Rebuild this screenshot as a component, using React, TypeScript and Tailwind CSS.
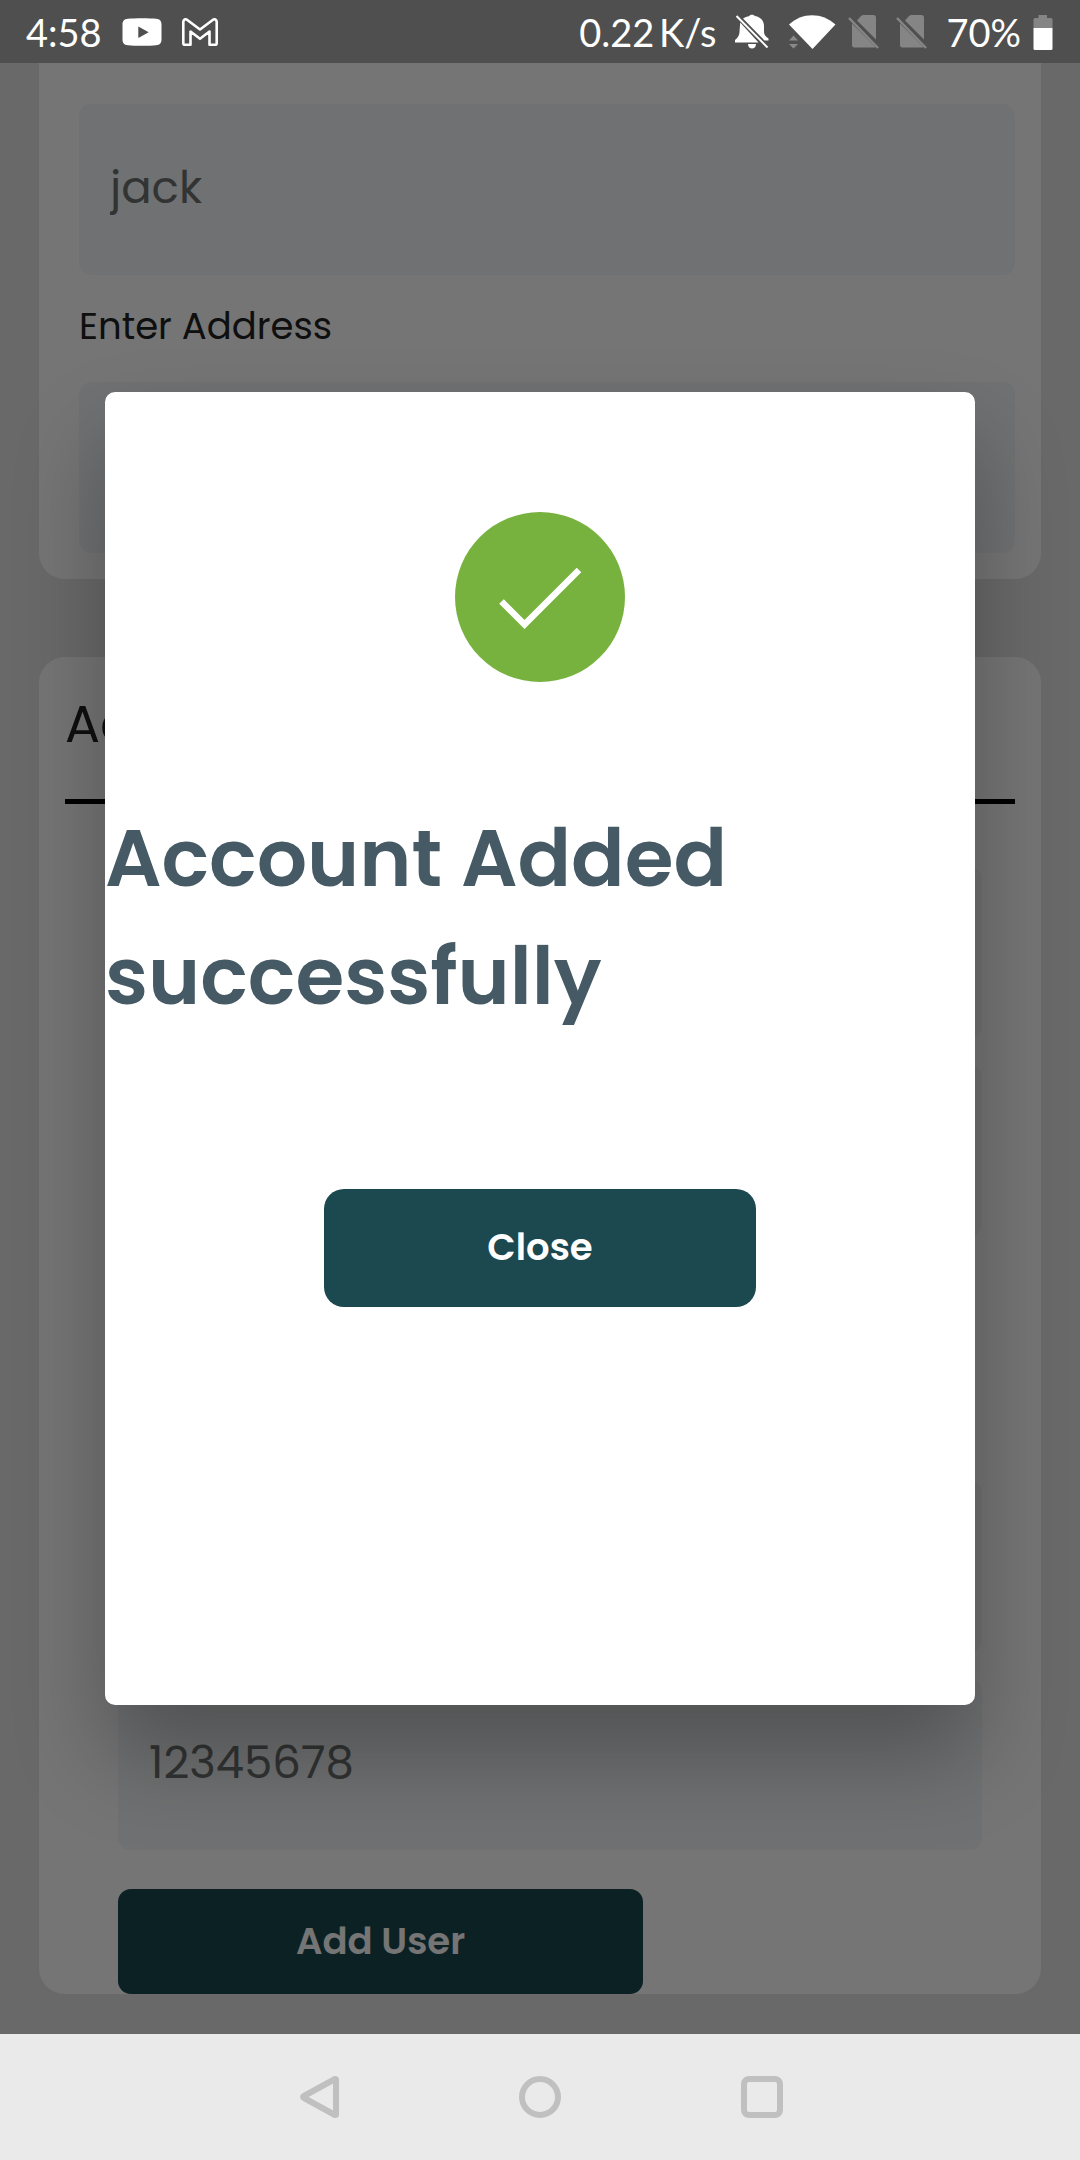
import { useId } from "react";

function YouTubeIcon() {
  return (
    <svg viewBox="0 0 40 28" className="h-7 w-10" aria-hidden="true">
      <path
        fill="#fff"
        fillRule="evenodd"
        d="M6 .8C12 0 28 0 34 .8c4 .5 5.500 2 5.500 6v14.400c0 4-1.500 5.500-5.500 6-6 .8-22 .8-28 0-4-.5-5.500-2-5.500-6V6.800c0-4 1.500-5.500 5.500-6ZM16.300 8.400v11.600L26.700 14.200Z"
      />
    </svg>
  );
}

function GmailIcon() {
  return (
    <svg viewBox="0 0 36 28" className="h-7 w-9" fill="none" stroke="#fff" strokeWidth="2.600" strokeLinejoin="round" aria-hidden="true">
      <path d="M1.300 4C1.300 1.400 3.500 .6 5.300 2L18 11.500 30.700 2C32.500 .6 34.700 1.400 34.700 4V25.200Q34.700 26.700 33.200 26.700H27.500V13.500L18 20.800 8.500 13.500V26.700H2.800Q1.300 26.700 1.300 25.200Z" />
    </svg>
  );
}

function BellOffIcon() {
  return (
    <svg viewBox="0 0 36 36" className="size-9" aria-hidden="true">
      <g fill="#fff">
        <path d="M9 4.500 30.500 26.500H34.500V24.500Q30 21.500 30 18V12C30 5.500 25 2.500 20.500 2V1.500C19.500 .5 16.500 .5 15.500 1.500V2Q11.500 2.500 9 4.500Z" />
        <path d="M6.200 8.500 24.500 28.500H1V26Q5.500 22.500 5.500 18Z" />
        <path d="M14 30H22C22 36 14 36 14 30Z" />
      </g>
      <path d="M2.500 2 33.500 33.500" stroke="#fff" strokeWidth="2" />
    </svg>
  );
}

function WifiIcon() {
  return (
    <svg viewBox="0 0 48 36" className="h-9 w-12" aria-hidden="true">
      <path fill="#fff" d="M1 10.500C14-2 34-2 47.500 10.500L24.500 35Z" />
      <path fill="#8a8a8a" d="M5.500 21.500 10 26.500H1ZM5.500 34.500 1 30H10Z" />
    </svg>
  );
}

function NoSimIcon() {
  return (
    <svg viewBox="0 0 32 36" className="h-9 w-8" aria-hidden="true">
      <path fill="#858585" d="M9 6.500 13 2Q14 1 15.500 1H25.500Q28 1 28 3.500V25.500Z" />
      <path fill="#858585" d="M4 9.500 27.500 33Q27 33.500 25.500 33.500H6.500Q4 33.500 4 31Z" />
      <path d="M1 4 30 34" stroke="#858585" strokeWidth="2.500" />
    </svg>
  );
}

function BatteryIcon() {
  return (
    <svg viewBox="0 0 20 36" className="h-9 w-5" aria-hidden="true">
      <path fill="#858585" d="M5.500 1H14V4H18Q19.500 4 19.500 5.500V14H.5V5.500Q.5 4 2 4H5.500Z" />
      <path fill="#fff" d="M.5 14H19.500V34.500Q19.500 36 18 36H2Q.5 36 .5 34.500Z" />
    </svg>
  );
}

function StatusBar() {
  return (
    <header className="flex h-[63px] items-center justify-between bg-[#4f4f4f] pl-[26px] pr-[27px] font-['Lato',sans-serif] text-[38px] leading-none text-white">
      <div className="flex items-center gap-5">
        <span>4:58</span>
        <YouTubeIcon />
        <GmailIcon />
      </div>
      <div className="flex items-center gap-[18px]">
        <span>0.22{"\u2009"}K/s</span>
        <BellOffIcon />
        <div className="flex items-center gap-3">
          <WifiIcon />
          <div className="flex items-center gap-4">
            <NoSimIcon />
            <NoSimIcon />
          </div>
        </div>
        <div className="flex items-center gap-3">
          <span>70%</span>
          <BatteryIcon />
        </div>
      </div>
    </header>
  );
}

function Field({ name, value, label }: { name: string; value?: string; label?: string }) {
  const id = useId();
  return (
    <div className="flex flex-col">
      {label && (
        <label htmlFor={id} className="pb-7 pt-6 text-[37px] leading-[55px] text-[#222]">
          {label}
        </label>
      )}
      <input
        id={id}
        type="text"
        name={name}
        aria-label={label ? undefined : name}
        defaultValue={value}
        className="h-[171px] w-full rounded-xl bg-[#f3f6f9] px-[31px] pb-1 text-[45px] text-[#6d6f70] outline-none"
      />
    </div>
  );
}

function UserForm() {
  return (
    <form className="flex flex-col gap-[78px] px-[39px] pb-10">
      <section className="rounded-b-[26px] bg-white pb-[26px] pl-10 pr-[26px] pt-[41px]">
        <Field name="Name" value="jack" />
        <Field name="Address" label="Enter Address" />
      </section>
      <section className="rounded-[26px] bg-white px-[26px]">
        <h2 className="border-b-[5px] border-black pb-[37px] pt-7 text-[52px] leading-[77px] text-[#222]">Account Details</h2>
        <div className="flex flex-col gap-[245px] pl-[53px] pr-[33px] pt-[63px]">
          <div className="flex flex-col gap-[27px]">
            <Field name="Account name" />
            <Field name="Email" />
          </div>
          <div className="flex flex-col gap-[27px]">
            <Field name="Phone" />
            <Field name="Account number" value="12345678" />
          </div>
        </div>
        <div className="flex pl-[53px] pr-[33px] pt-[39px]">
          <button type="button" className="h-[105px] w-[525px] rounded-[13px] bg-[#1b494f] text-[37px] font-semibold text-white">
            Add User
          </button>
        </div>
      </section>
    </form>
  );
}

function SuccessDialog() {
  return (
    <div className="absolute inset-0 flex items-center overflow-hidden bg-black/54 px-[105px]">
      <div
        role="dialog"
        aria-modal="true"
        aria-labelledby="dialog-title"
        className="flex w-full flex-col items-center rounded-[10px] bg-white pb-[398px] pt-[120px] shadow-[0_50px_90px_rgba(0,0,0,0.28)]"
      >
        <svg viewBox="0 0 170 170" className="size-[170px]" aria-hidden="true">
          <circle cx="85" cy="85" r="85" fill="#77b23f" />
          <path d="M46.500 89.500 69.500 112.500 124 58" fill="none" stroke="#fff" strokeWidth="6.500" />
        </svg>
        <h1 id="dialog-title" className="w-full pb-[153px] pt-[118px] text-[79px] font-semibold leading-[118px] text-[#455a64]">
          Account Added
          <br />
          successfully
        </h1>
        <button type="button" className="h-[118px] w-[432px] rounded-[20px] bg-[#1b494f] text-[37px] font-semibold text-white">
          Close
        </button>
      </div>
    </div>
  );
}

function NavigationBar() {
  return (
    <nav className="flex h-[126px] items-center justify-center gap-[180px] bg-[#eaeaea]">
      <button type="button" aria-label="Back">
        <svg viewBox="0 0 42 42" className="size-[42px]" fill="none" stroke="#c0c0c0" strokeWidth="6" strokeLinejoin="round" aria-hidden="true">
          <path d="M39 3.500V38.500Q39 39 38 39L7 22Q5 21 7 20L38 3Q39 3 39 3.500Z" />
        </svg>
      </button>
      <button type="button" aria-label="Home">
        <svg viewBox="0 0 42 42" className="size-[42px]" fill="none" stroke="#c0c0c0" strokeWidth="6" aria-hidden="true">
          <circle cx="21" cy="21" r="18" />
        </svg>
      </button>
      <button type="button" aria-label="Recent apps">
        <svg viewBox="0 0 42 42" className="size-[42px]" fill="none" stroke="#c0c0c0" strokeWidth="6" aria-hidden="true">
          <rect x="3" y="3" width="36" height="36" rx="5" />
        </svg>
      </button>
    </nav>
  );
}

export default function App() {
  return (
    <div className="flex min-h-screen flex-col font-['Poppins','Inter',sans-serif]">
      <StatusBar />
      <main className="relative flex-1 bg-[#e5e5e5]">
        <UserForm />
        <SuccessDialog />
      </main>
      <NavigationBar />
    </div>
  );
}
